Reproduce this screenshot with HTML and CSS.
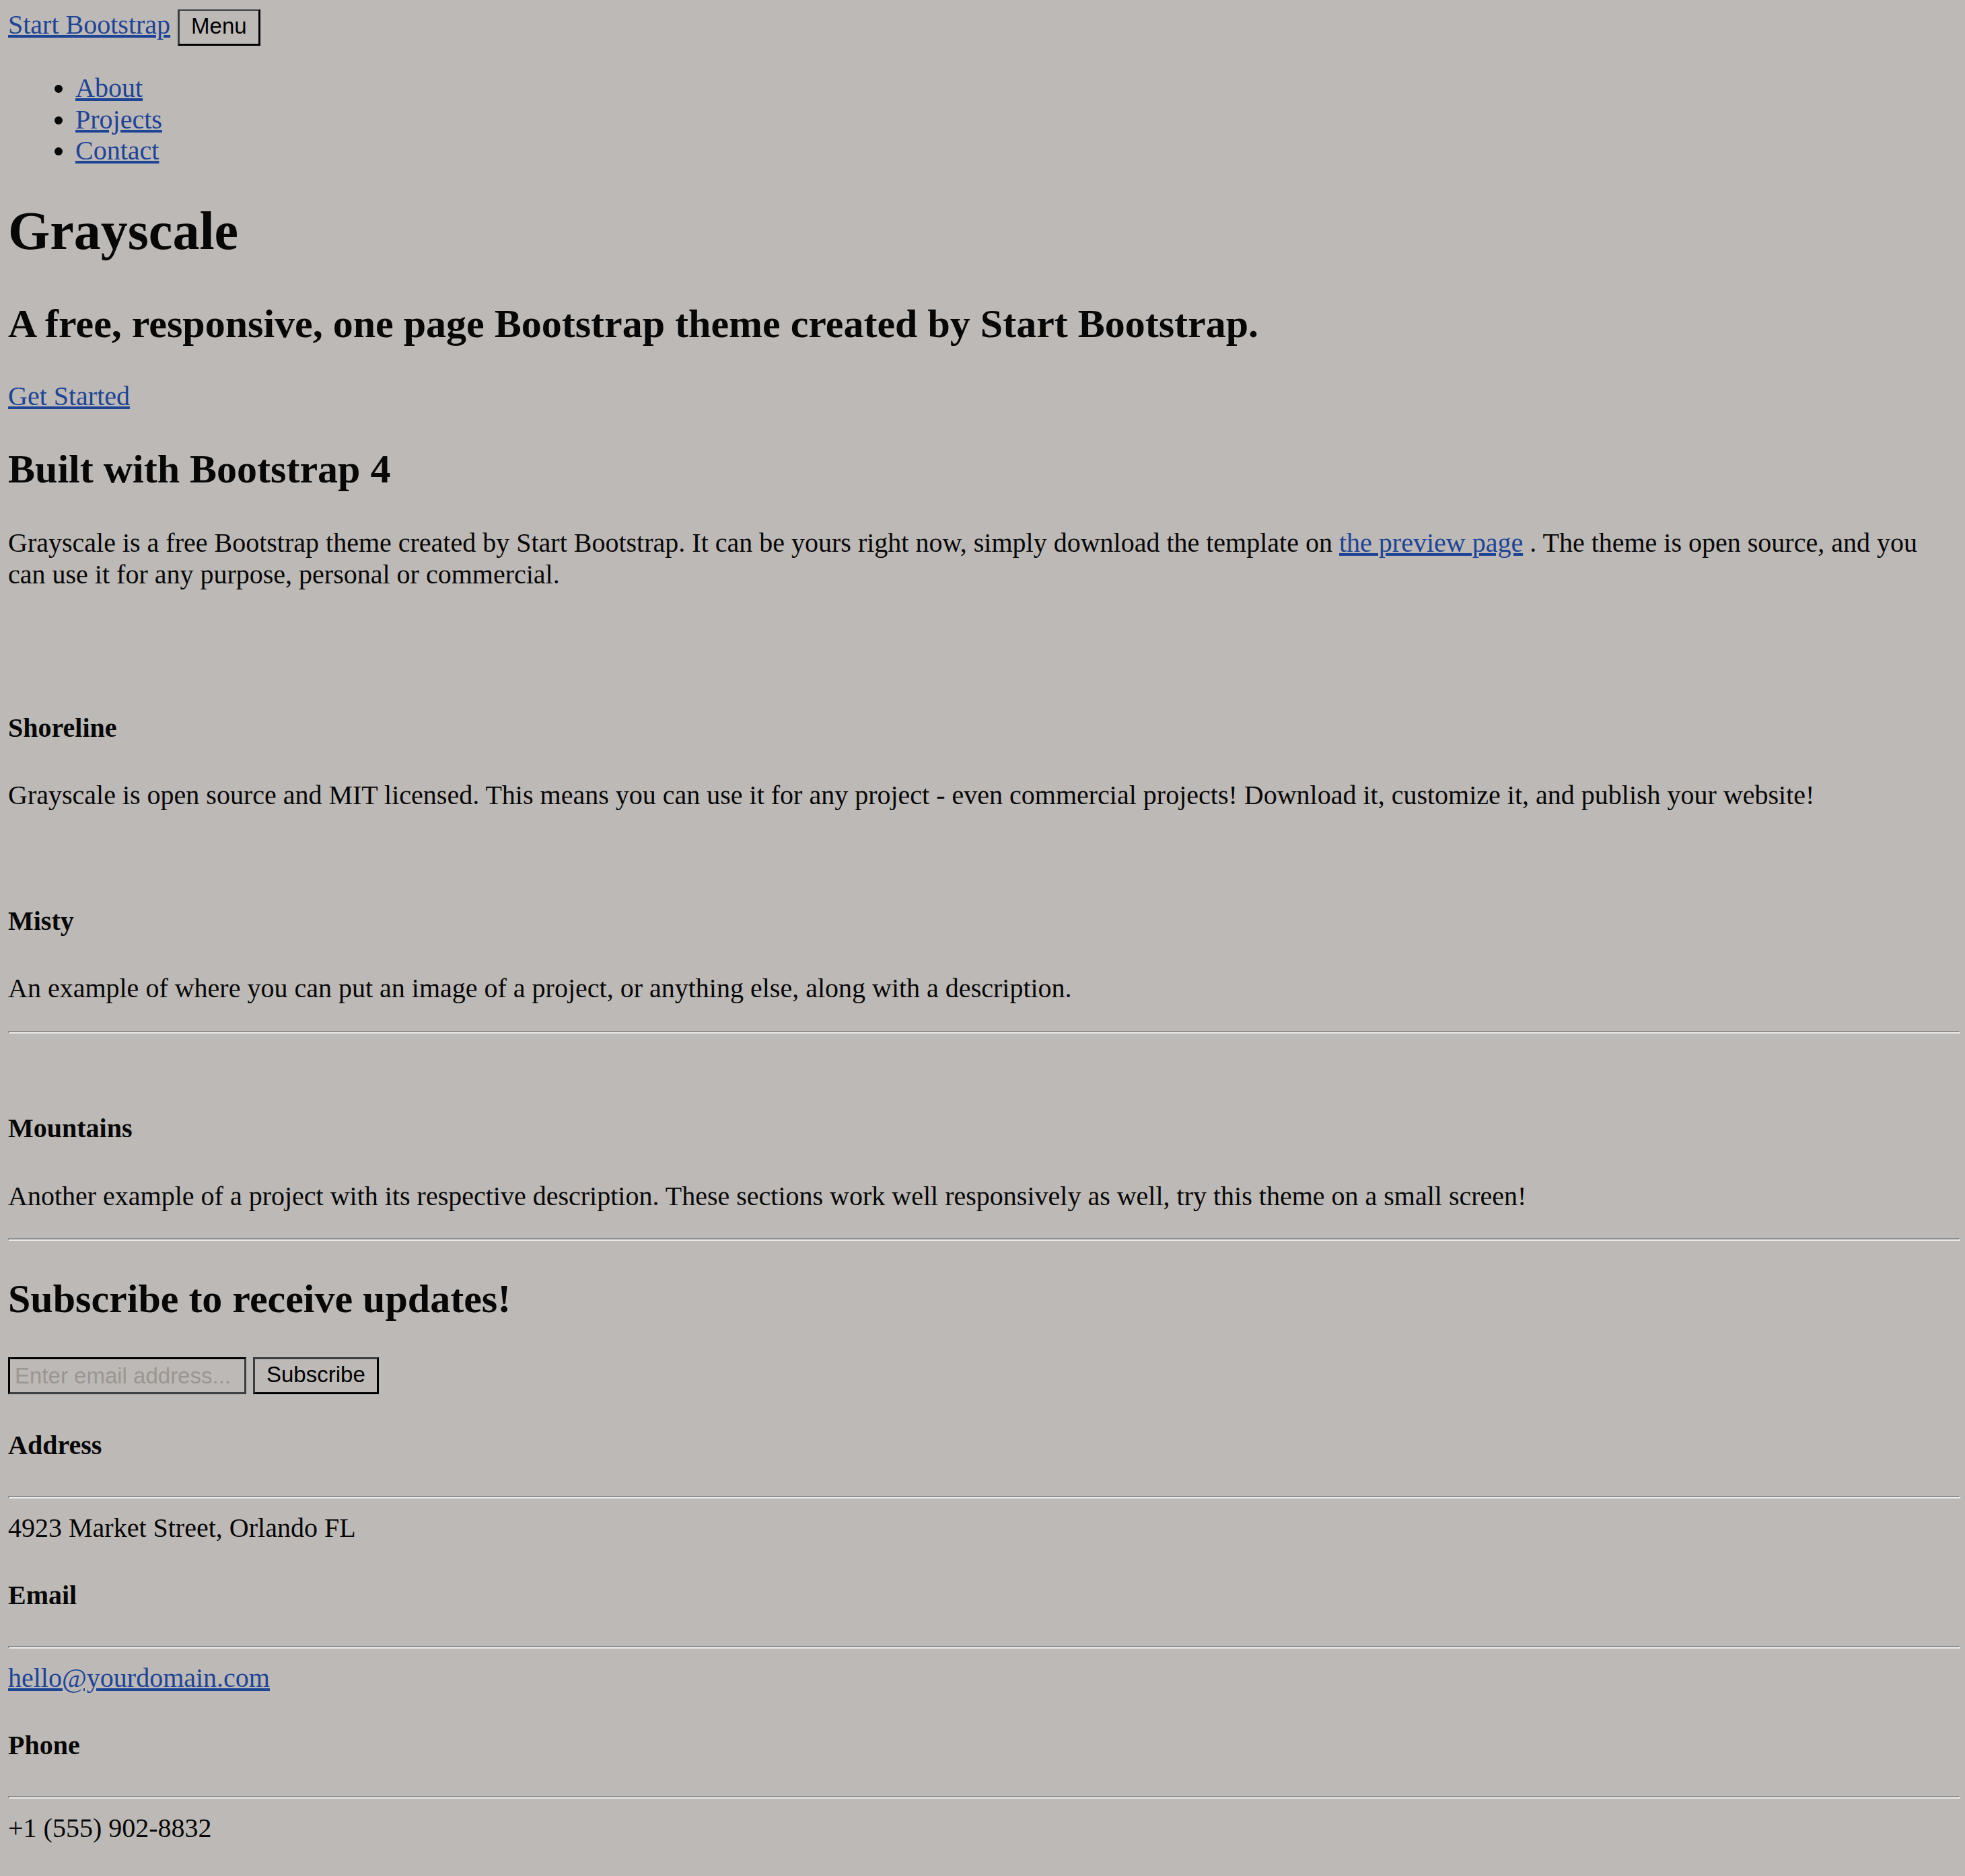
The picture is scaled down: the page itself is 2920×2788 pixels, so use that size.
FILE: index.html
```html
<!DOCTYPE html>
<html lang="en">
<head>
<meta charset="utf-8">
<title>Grayscale - Start Bootstrap Theme</title>
<link rel="stylesheet" href="styles.css">
</head>
<body>
<div class="page">
  <nav class="topbar">
    <a class="brand" href="#page-top">Start Bootstrap</a>
    <button class="btn menu-btn" type="button">Menu</button>
  </nav>
  <ul class="nav-links">
    <li><a href="#about">About</a></li>
    <li><a href="#projects">Projects</a></li>
    <li><a href="#signup">Contact</a></li>
  </ul>

  <header class="masthead">
    <h1 class="hero-title">Grayscale</h1>
    <h2 class="hero-sub">A free, responsive, one page Bootstrap theme created by Start Bootstrap.</h2>
    <p class="hero-cta"><a href="#about">Get Started</a></p>
  </header>

  <section class="about" id="about">
    <h2 class="section-title">Built with Bootstrap 4</h2>
    <p class="about-text">Grayscale is a free Bootstrap theme created by Start Bootstrap. It can be yours right now, simply download the template on <a href="#">the preview page</a> . The theme is open source, and you can use it for any purpose, personal or commercial.</p>
  </section>

  <section class="projects" id="projects">
    <div class="project project-featured">
      <h4 class="project-title">Shoreline</h4>
      <p class="project-text">Grayscale is open source and MIT licensed. This means you can use it for any project - even commercial projects! Download it, customize it, and publish your website!</p>
    </div>
    <div class="project project-misty">
      <h4 class="project-title">Misty</h4>
      <p class="project-text">An example of where you can put an image of a project, or anything else, along with a description.</p>
      <hr class="rule">
    </div>
    <div class="project project-mountains">
      <h4 class="project-title">Mountains</h4>
      <p class="project-text">Another example of a project with its respective description. These sections work well responsively as well, try this theme on a small screen!</p>
      <hr class="rule">
    </div>
  </section>

  <section class="signup" id="signup">
    <h2 class="signup-title">Subscribe to receive updates!</h2>
    <form class="signup-form">
      <input class="email-input" type="email" placeholder="Enter email address...">
      <button class="btn subscribe-btn" type="submit">Subscribe</button>
    </form>
  </section>

  <section class="contact">
    <div class="contact-card card-first">
      <h4 class="card-title">Address</h4>
      <hr class="rule card-rule">
      <div class="card-value">4923 Market Street, Orlando FL</div>
    </div>
    <div class="contact-card">
      <h4 class="card-title">Email</h4>
      <hr class="rule card-rule">
      <div class="card-value"><a href="#">hello@yourdomain.com</a></div>
    </div>
    <div class="contact-card">
      <h4 class="card-title">Phone</h4>
      <hr class="rule card-rule">
      <div class="card-value">+1 (555) 902-8832</div>
    </div>
  </section>
</div>
</body>
</html>
```

FILE: styles.css
```css
html {
  background: #bdb9b6;
}

body {
  margin: 14px 7px 40px 12px;
  font-family: "Liberation Serif", "Times New Roman", serif;
  font-size: 40px;
  line-height: 46.6px;
  color: #070707;
  background: #bdb9b6;
}

a {
  color: #1e4496;
  text-decoration: underline;
}

h1, h2, h4, p, ul {
  margin: 0;
}

.page {
  display: flex;
  flex-direction: column;
}

/* top bar */
.topbar {
  display: flex;
  align-items: flex-start;
  gap: 11px;
}

.brand {
  display: block;
}

.btn {
  box-sizing: border-box;
  height: 55px;
  margin: 0;
  padding: 4px 17px 7px;
  font-family: "Liberation Sans", Arial, sans-serif;
  font-size: 33px;
  line-height: 38px;
  color: #000;
  background: transparent;
  border: 3px solid;
  border-color: #393c40 #000 #000 #393c40;
  border-radius: 0;
}

.menu-btn {
  margin-top: -1px;
}

.nav-links {
  margin-top: 40px;
  padding-left: 100px;
  list-style: disc;
}

/* masthead */
.hero-title {
  margin-top: 49px;
  font-size: 80px;
  line-height: 93px;
  font-weight: bold;
}

.hero-sub {
  margin-top: 56px;
  font-size: 60px;
  line-height: 70px;
  font-weight: bold;
}

.hero-cta {
  margin-top: 50px;
}

/* about */
.section-title {
  margin-top: 50px;
  font-size: 60px;
  line-height: 70px;
  font-weight: bold;
}

.about-text {
  margin-top: 52px;
}

/* projects */
.project-title {
  font-size: 40px;
  line-height: 46.6px;
  font-weight: bold;
}

.project-text {
  margin-top: 54px;
}

.project-featured {
  margin-top: 181px;
}

.project-misty {
  margin-top: 140px;
}

.project-mountains {
  margin-top: 118px;
}

.rule {
  display: block;
  height: 0;
  margin: 39px 0 0;
  border-style: solid;
  border-width: 2.5px;
  border-color: #8e8e8e #ebebeb #ebebeb #8e8e8e;
}

/* signup */
.signup-title {
  margin-top: 51px;
  font-size: 60px;
  line-height: 70px;
  font-weight: bold;
}

.signup-form {
  display: flex;
  gap: 10px;
  margin-top: 52px;
}

.email-input {
  box-sizing: border-box;
  width: 354px;
  height: 55px;
  margin: 0;
  padding: 0 7px;
  font-family: "Liberation Sans", Arial, sans-serif;
  font-size: 33px;
  color: #000;
  background: transparent;
  border: 3px solid;
  border-color: #000 #393c40 #393c40 #000;
  border-radius: 0;
}

.email-input::placeholder {
  color: #9a9692;
}

/* contact */
.contact-card {
  margin-top: 53px;
}

.card-first {
  margin-top: 53px;
}

.card-title {
  font-size: 40px;
  line-height: 46.6px;
  font-weight: bold;
}

.card-rule {
  margin: 51.5px 0 21px;
}
```
